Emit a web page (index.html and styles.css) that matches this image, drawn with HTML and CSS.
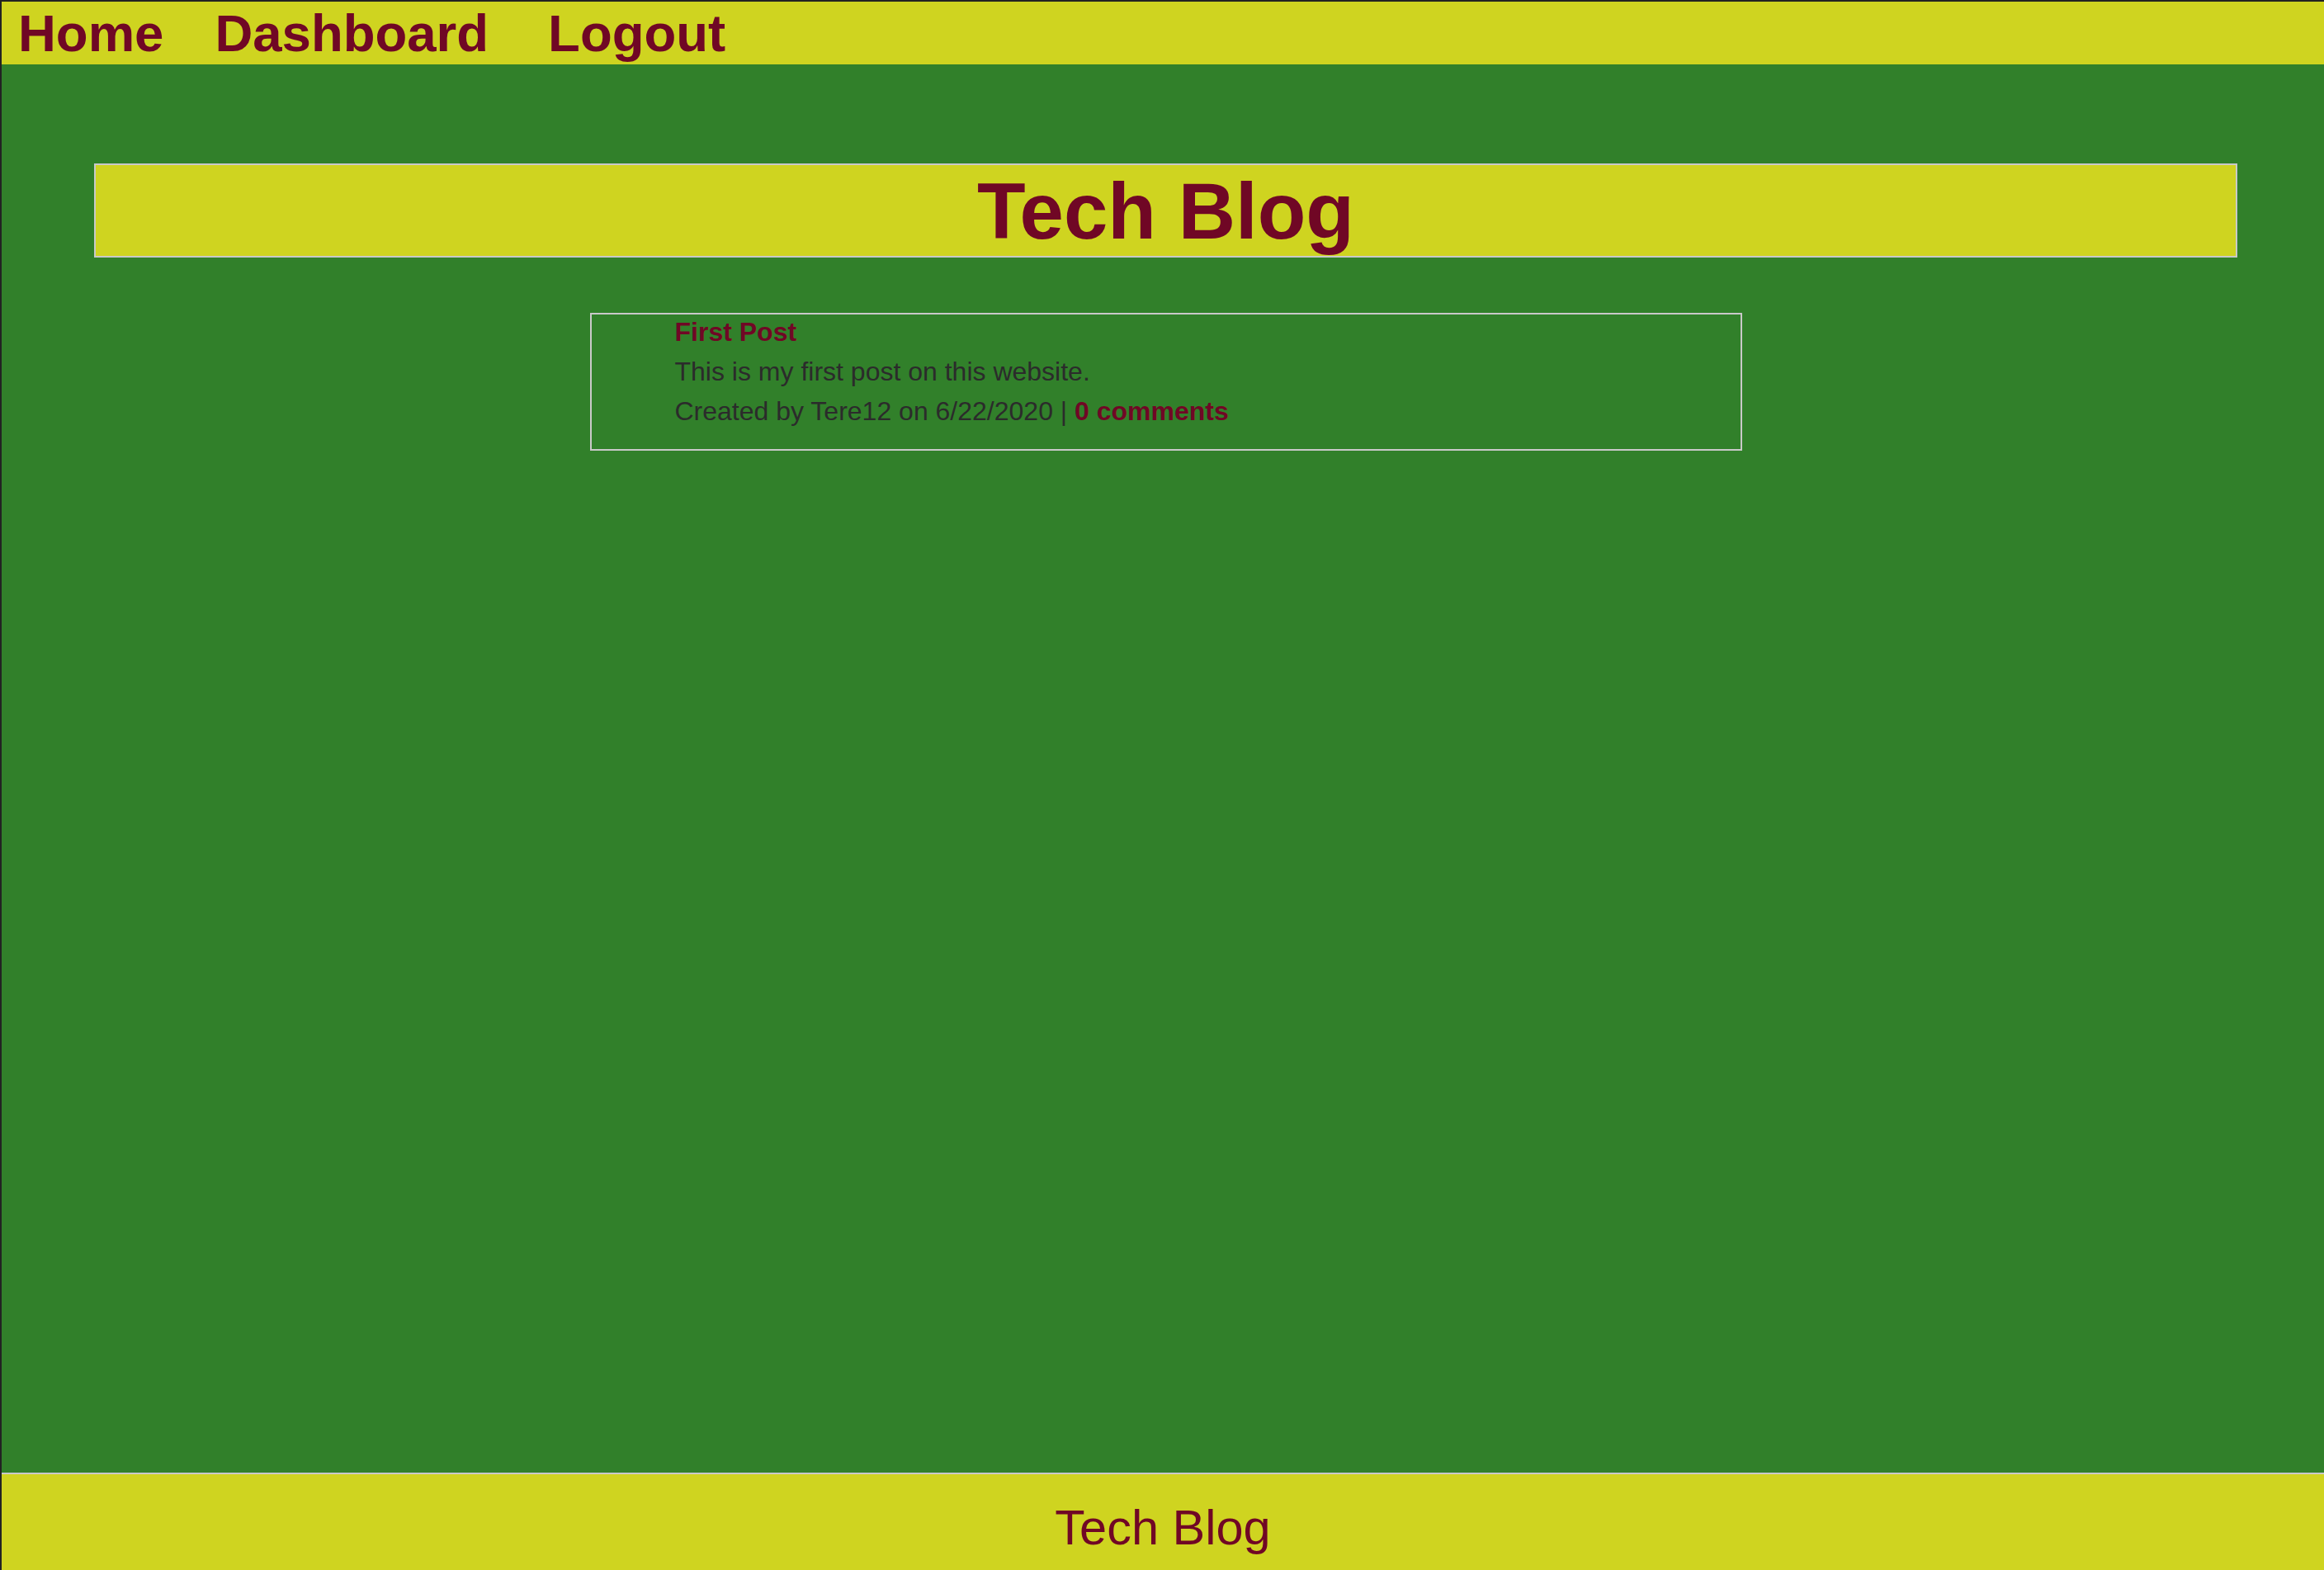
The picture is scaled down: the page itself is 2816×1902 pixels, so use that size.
FILE: index.html
```html
<!DOCTYPE html>
<html lang="en">
<head>
<meta charset="utf-8">
<title>Tech Blog</title>
<link rel="stylesheet" href="styles.css">
</head>
<body>
<nav class="nav">
  <a class="nav-link" href="#">Home</a>
  <a class="nav-link nav-dash" href="#">Dashboard</a>
  <a class="nav-link nav-logout" href="#">Logout</a>
</nav>
<main class="main">
  <h1 class="title">Tech Blog</h1>
  <article class="post">
    <a class="post-title" href="#">First Post</a>
    <p class="post-line">This is my first post on this website.</p>
    <p class="post-line">Created by Tere12 on 6/22/2020 | <a class="post-comments" href="#">0 comments</a></p>
  </article>
</main>
<footer class="footer">Tech Blog</footer>
</body>
</html>
```

FILE: styles.css
```css
html, body {
  height: 100%;
}
body {
  margin: 0;
  box-sizing: border-box;
  min-height: 100vh;
  display: flex;
  flex-direction: column;
  border-top: 2px solid #222;
  border-left: 2px solid #222;
  background: #31802a;
  font-family: "Liberation Sans", Arial, Helvetica, sans-serif;
  color: #2b2b2b;
}
a {
  text-decoration: none;
  color: #700725;
}
.nav {
  background: #cfd420;
  height: 76px;
  box-sizing: border-box;
  padding: 2px 0 0 20px;
  display: flex;
  align-items: flex-start;
}
.nav-link {
  font-weight: bold;
  font-size: 63.5px;
  line-height: normal;
}
.nav-dash {
  margin-left: 62px;
}
.nav-logout {
  margin-left: 72px;
}
.main {
  flex: 1;
  padding: 120px 105px 0 112px;
  display: flex;
  flex-direction: column;
}
.title {
  margin: 0;
  background: #cfd420;
  border: 2px solid #c9c9c9;
  color: #700725;
  text-align: center;
  font-size: 96px;
  font-weight: bold;
  line-height: 108px;
  padding: 2px 0 0;
}
.post {
  margin: 67px auto 0;
  width: 1396px;
  box-sizing: border-box;
  border: 2px solid #c9c9c9;
  padding: 0 0 22px 101px;
  font-size: 32px;
  line-height: 48px;
}
.post-title {
  display: block;
  font-weight: bold;
  margin-top: -3px;
}
.post-line {
  margin: 0;
}
.post-comments {
  font-weight: bold;
}
.footer {
  background: #cfd420;
  border-top: 2px solid #c9c9c9;
  height: 118px;
  box-sizing: border-box;
  padding-top: 30px;
  text-align: center;
  color: #700725;
  font-size: 59.5px;
  line-height: normal;
}
```
